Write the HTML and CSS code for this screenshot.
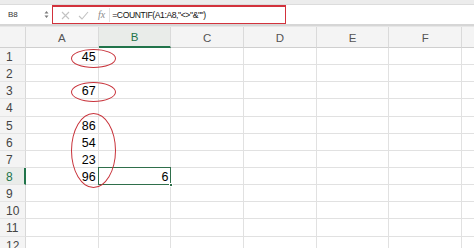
FILE: index.html
```html
<!DOCTYPE html>
<html lang="en">

<head>
	<meta charset="UTF-8">
	<meta name="viewport" content="width=device-width, initial-scale=1.0">
	<title>COUNTIF</title>
	<link rel="stylesheet" href="styles.css">
</head>

<body>
	<div class="toolbar"></div>
	<div class="formula-bar">
		<div class="name-box">
			<span class="name">B8</span>
			<span class="spin">
				<svg width="5" height="9" viewBox="0 0 5 9"><path d="M0.5 3.5 L2.5 1 L4.5 3.5 Z M0.5 5.5 L2.5 8 L4.5 5.5 Z" fill="#7a7a7a"/></svg>
			</span>
		</div>
		<div class="formula-box">
			<span class="fb-icon">
				<svg width="9" height="9" viewBox="0 0 9 9"><path d="M1 1 L8 8 M8 1 L1 8" stroke="#c2c2c2" stroke-width="1.1" fill="none"/></svg>
			</span>
			<span class="fb-icon">
				<svg width="11" height="9" viewBox="0 0 11 9"><path d="M1 5 L4 8 L10 1" stroke="#c2c2c2" stroke-width="1.1" fill="none"/></svg>
			</span>
			<span class="fx">fx</span>
			<span class="formula">=COUNTIF(A1:A8,"&lt;&gt;"&amp;"")</span>
		</div>
		<div class="formula-rest"></div>
	</div>
	<div class="sheet">
		<div class="grid">
			<div class="corner"></div>
			<div class="col-head">A</div>
			<div class="col-head is-active">B</div>
			<div class="col-head">C</div>
			<div class="col-head">D</div>
			<div class="col-head">E</div>
			<div class="col-head">F</div>
			<div class="col-head last"></div>

			<div class="row-head">1</div><div class="cell num">45</div><div class="cell"></div><div class="cell"></div><div class="cell"></div><div class="cell"></div><div class="cell"></div><div class="cell last"></div>
			<div class="row-head">2</div><div class="cell"></div><div class="cell"></div><div class="cell"></div><div class="cell"></div><div class="cell"></div><div class="cell"></div><div class="cell last"></div>
			<div class="row-head">3</div><div class="cell num">67</div><div class="cell"></div><div class="cell"></div><div class="cell"></div><div class="cell"></div><div class="cell"></div><div class="cell last"></div>
			<div class="row-head">4</div><div class="cell"></div><div class="cell"></div><div class="cell"></div><div class="cell"></div><div class="cell"></div><div class="cell"></div><div class="cell last"></div>
			<div class="row-head">5</div><div class="cell num">86</div><div class="cell"></div><div class="cell"></div><div class="cell"></div><div class="cell"></div><div class="cell"></div><div class="cell last"></div>
			<div class="row-head">6</div><div class="cell num">54</div><div class="cell"></div><div class="cell"></div><div class="cell"></div><div class="cell"></div><div class="cell"></div><div class="cell last"></div>
			<div class="row-head">7</div><div class="cell num">23</div><div class="cell"></div><div class="cell"></div><div class="cell"></div><div class="cell"></div><div class="cell"></div><div class="cell last"></div>
			<div class="row-head is-active">8</div><div class="cell num">96</div><div class="cell num selected">6<span class="fill-handle"></span></div><div class="cell"></div><div class="cell"></div><div class="cell"></div><div class="cell"></div><div class="cell last"></div>
			<div class="row-head">9</div><div class="cell"></div><div class="cell"></div><div class="cell"></div><div class="cell"></div><div class="cell"></div><div class="cell"></div><div class="cell last"></div>
			<div class="row-head">10</div><div class="cell"></div><div class="cell"></div><div class="cell"></div><div class="cell"></div><div class="cell"></div><div class="cell"></div><div class="cell last"></div>
			<div class="row-head">11</div><div class="cell"></div><div class="cell"></div><div class="cell"></div><div class="cell"></div><div class="cell"></div><div class="cell"></div><div class="cell last"></div>
			<div class="row-head">12</div><div class="cell"></div><div class="cell"></div><div class="cell"></div><div class="cell"></div><div class="cell"></div><div class="cell"></div><div class="cell last"></div>
		</div>
		<div class="mark mark-1"></div>
		<div class="mark mark-3"></div>
		<div class="mark mark-5"></div>
	</div>
</body>

</html>
```

FILE: styles.css
```css
*,
*::before,
*::after {
	box-sizing: border-box;
}

body {
	margin: 0;
	width: 474px;
	height: 248px;
	overflow: hidden;
	background-color: #ffffff;
	font-family: "Liberation Sans", Arial, sans-serif;
	color: #222222;
}

.toolbar {
	height: 5px;
	background-color: #ececec;
	border-bottom: 1px solid #dcdcdc;
}

.formula-bar {
	display: flex;
	height: 21px;
	background-color: #ffffff;
	border-bottom: 2px solid #d6d6d6;
}

.name-box {
	width: 52px;
	display: flex;
	align-items: center;
	justify-content: space-between;
	padding: 0 3px 0 8px;
}

.name {
	font-size: 8px;
	color: #333333;
}

.spin {
	display: flex;
}

.formula-box {
	width: 234px;
	display: flex;
	align-items: center;
	border: 1.5px solid #d2323c;
	border-top-width: 2px;
	padding-left: 8px;
}

.fb-icon {
	display: flex;
	margin-right: 8px;
}

.fx {
	font-family: "Liberation Serif", serif;
	font-style: italic;
	font-size: 10px;
	color: #8a8a8a;
	margin-left: 1px;
	padding-right: 4px;
	border-right: 1px solid #e2e2e2;
	line-height: 14px;
}

.formula {
	font-size: 8.6px;
	letter-spacing: -0.4px;
	color: #111111;
	margin-left: 2px;
	white-space: nowrap;
}

.formula-rest {
	flex: 1;
}

.sheet {
	position: relative;
	border-top: 1px solid #e6e6e6;
	background-color: #f4f4f4;
}

.grid {
	display: grid;
	grid-template-columns: 26px repeat(6, 72.7px) 1fr;
	grid-template-rows: 21px repeat(12, 17.15px);
	background-color: #ffffff;
}

.corner {
	background-color: #f4f4f4;
	border-right: 1px solid #d8d8d8;
	border-bottom: 1px solid #d0d0d0;
}

.col-head {
	display: flex;
	align-items: center;
	justify-content: center;
	padding-top: 1px;
	background-color: #f4f4f4;
	border-right: 1px solid #dadada;
	border-bottom: 1px solid #cfcfcf;
	font-size: 11.5px;
	color: #555555;
}

.col-head.is-active {
	color: #21744a;
	background-color: #e9ece9;
	border-bottom: 2px solid #21744a;
}

.col-head.last {
	border-right: none;
}

.row-head {
	padding: 2px 0 0 6px;
	background-color: #f4f4f4;
	border-right: 1px solid #d8d8d8;
	border-bottom: 1px solid #e4e4e4;
	font-size: 12px;
	line-height: 15px;
	color: #444444;
}

.row-head.is-active {
	color: #21744a;
	background-color: #e9ece9;
	border-right: 2px solid #21744a;
}

.cell {
	border-right: 1px solid #e1e1e1;
	border-bottom: 1px solid #e1e1e1;
	font-size: 12.5px;
	line-height: 15px;
	color: #000000;
	padding: 2px 2px 0;
}

.cell.last {
	border-right: none;
}

.num {
	text-align: right;
}

.selected {
	position: relative;
	border: 1.5px solid #2f6f4b;
	margin: -1px 0 0 -1px;
	padding-top: 2.5px;
	line-height: 14px;
}

.fill-handle {
	position: absolute;
	right: -3px;
	bottom: -3px;
	width: 4px;
	height: 4px;
	background-color: #2f6f4b;
	border: 1px solid #ffffff;
}

.mark {
	position: absolute;
	left: 71px;
	width: 45px;
	border: 1.4px solid #c8323a;
	border-radius: 50%;
}

.mark-1 {
	top: 22px;
	height: 19px;
}

.mark-3 {
	top: 55px;
	height: 20px;
}

.mark-5 {
	top: 86px;
	height: 75px;
}
```
